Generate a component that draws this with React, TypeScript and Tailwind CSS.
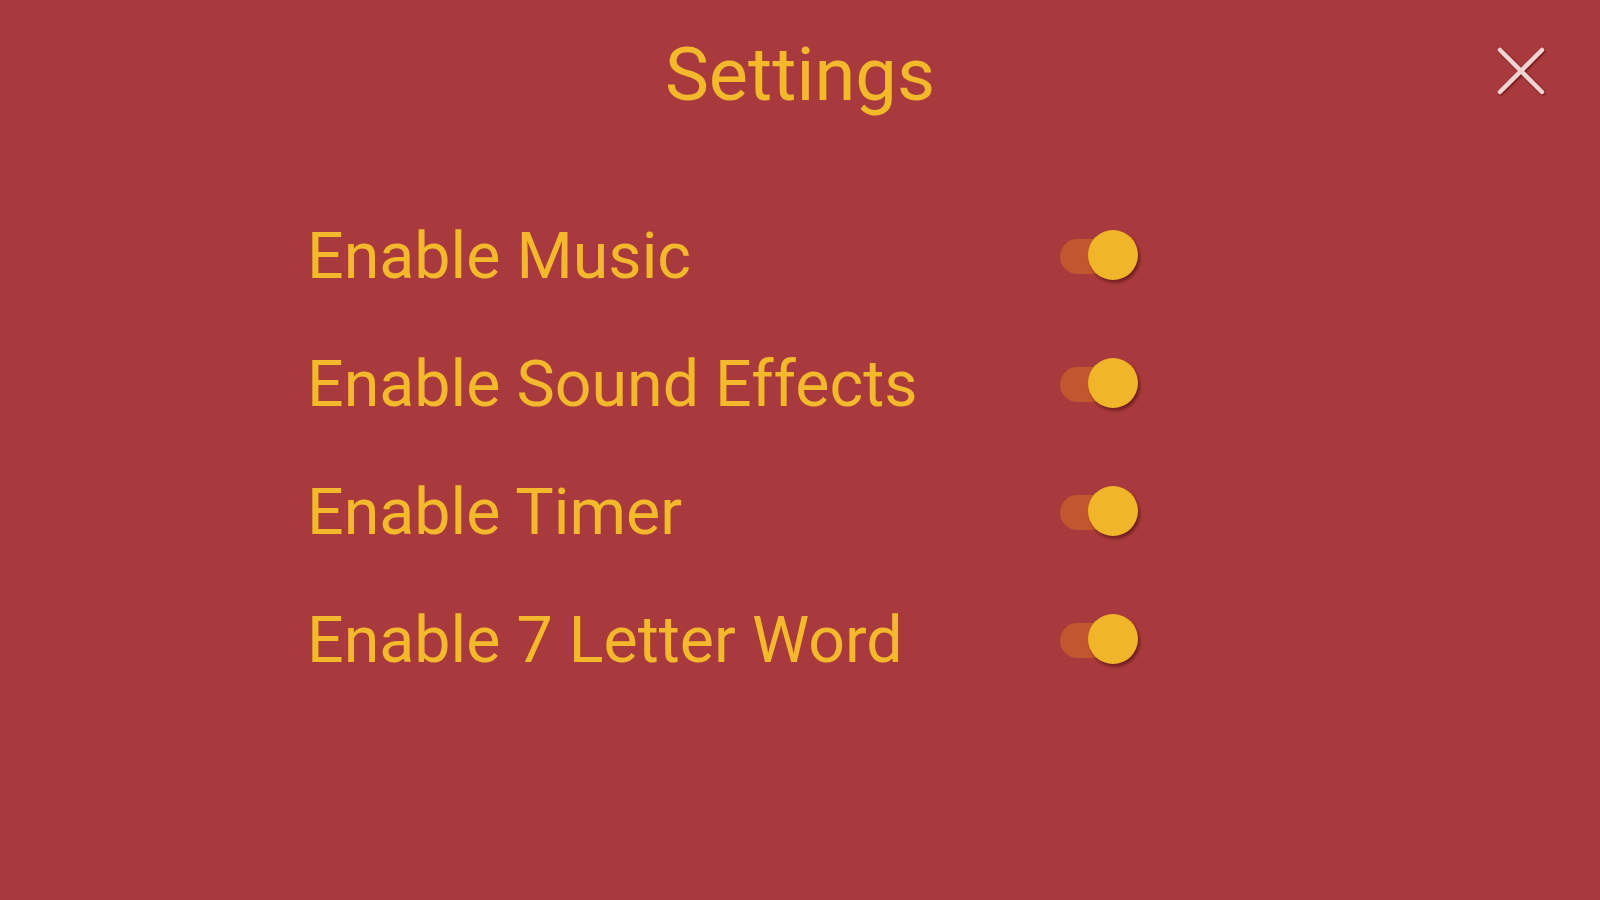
import React, { useState } from 'react';

const rows = [
  { id: 'music', label: 'Enable Music' },
  { id: 'sfx', label: 'Enable Sound Effects' },
  { id: 'timer', label: 'Enable Timer' },
  { id: 'sevenLetter', label: 'Enable 7 Letter Word' },
];

const Toggle = ({ on, onClick }: { on: boolean; onClick: () => void }) => (
  <button onClick={onClick} className="relative w-[80px] h-[52px] shrink-0">
    <span className="absolute left-0 top-[9px] w-[70px] h-[35px] rounded-full bg-[#c2562f]" />
    <span
      className={
        on
          ? 'absolute right-[2px] top-0 w-[50px] h-[50px] rounded-full bg-[#f1b529] shadow-[2px_3px_3px_rgba(60,0,0,0.45)]'
          : 'absolute left-0 top-0 w-[50px] h-[50px] rounded-full bg-[#f1b529] shadow-[2px_3px_3px_rgba(60,0,0,0.45)]'
      }
    />
  </button>
);

const App = () => {
  const [settings, setSettings] = useState<Record<string, boolean>>({
    music: true,
    sfx: true,
    timer: true,
    sevenLetter: true,
  });

  const toggle = (id: string) => setSettings({ ...settings, [id]: !settings[id] });

  return (
    <div
      className="w-[1600px] h-[900px] bg-[#a83a3d] text-[#f3b82b] overflow-hidden"
      style={{ fontFamily: 'Roboto, "Noto Sans", sans-serif' }}
    >
      <header className="grid grid-cols-[1fr_auto_1fr] items-start pt-[30px]">
        <div />
        <h1 className="text-[74px] leading-[90px] font-normal">Settings</h1>
        <div className="flex justify-end pr-[54px] pt-[16px]">
          <button className="w-[50px] h-[50px] flex items-center justify-center">
            <svg width="48" height="48" viewBox="0 0 48 48" className="drop-shadow-[1px_1px_1px_rgba(70,0,0,0.7)]">
              <path d="M3 3 L45 45 M45 3 L3 45" stroke="#f2d3d3" strokeWidth="4.5" strokeLinecap="round" />
            </svg>
          </button>
        </div>
      </header>

      <div className="mt-[72px] pl-[307px] flex flex-col">
        {rows.map(row => (
          <div key={row.id} className="flex items-center w-[833px] h-[128px]">
            <span className="flex-1 text-[64.5px] leading-[128px]">{row.label}</span>
            <Toggle on={settings[row.id]} onClick={() => toggle(row.id)} />
          </div>
        ))}
      </div>
    </div>
  );
};

export default App;
